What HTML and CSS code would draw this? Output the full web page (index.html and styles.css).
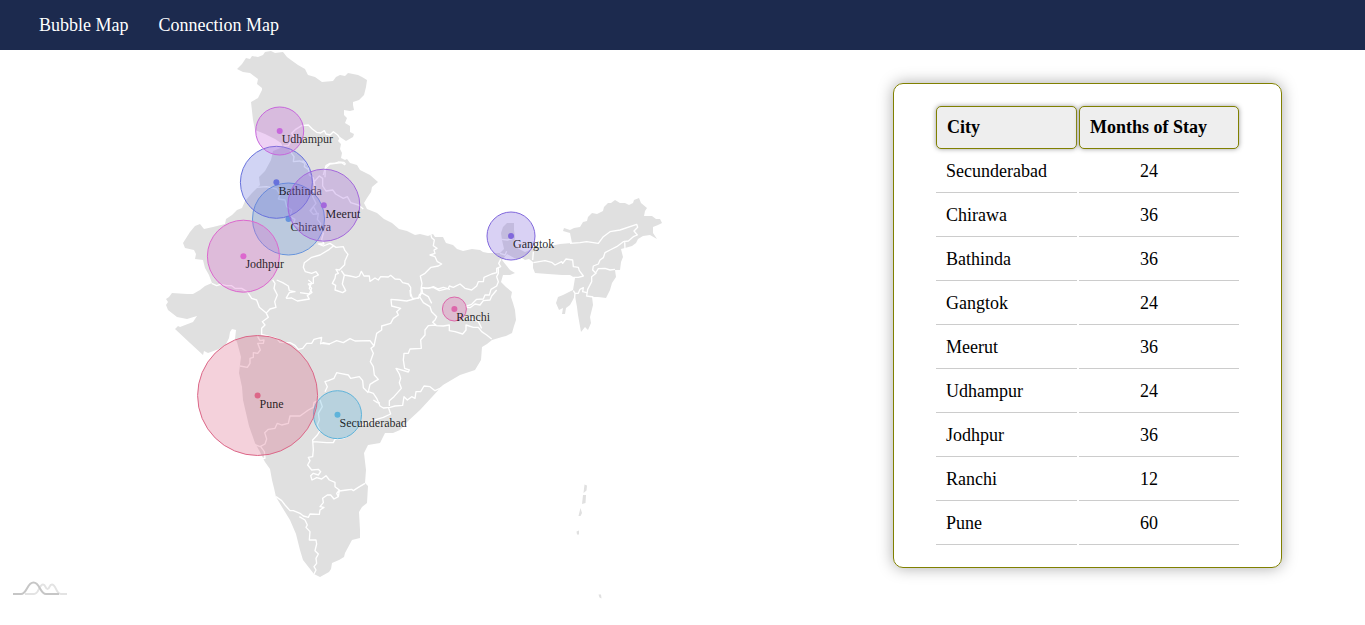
FILE: index.html
```html
<!DOCTYPE html>
<html lang="en">
<head>
<meta charset="utf-8">
<title>Bubble Map</title>
<link rel="stylesheet" href="styles.css">
</head>
<body>
<nav class="navbar"><a class="nav-link" href="#">Bubble Map</a><a class="nav-link" href="#">Connection Map</a></nav>
<main class="content">
<svg class="map" viewBox="0 50 800 575" width="800" height="575">
  <g class="land">
    <path d="M237 69L242 64 246 58 250 59 252 56 258 57 263 55 265 52 271 51 275 53 283 52 287 57 291 60 298 65 305 69 308 75 315 77 322 82 333 81 336 77 340 75 345 76 348 73 358 75 362 77 367 80 366 87 364 95 359 100 353 102 353 105 354 110 350 111 344 110 344 115 347 118 345 123 350 126 350 132 354 134 353 137 346 141 340 137 338 141 341 144 340 149 342 153 341 158 345 160 347 159 350 163 357 165 360 170 370 175 378 182 372 187 371 192 367 198 364 203 367 209 377 213 384 219 392 223 399 229 407 231 415 235 420 234 428 236 433 234 435 237 443 237 446 243 453 245 457 249 463 251 472 249 480 250 483 252 488 253 500 253 504 249 502 240 501 233 503 227 507 223 514 223 514 230 515 237 514 244 519 249 525 252 530 250 532 247 540 247 550 246 560 244 572 243 570 233 563 231 564 228 570 230 574 228 580 227 583 222 587 221 588 217 592 213 597 214 603 211 604 207 608 203 611 203 615 200 620 203 625 203 629 205 633 203 634 200 639 198 641 203 647 208 645 211 644 216 652 216 656 219 660 219 662 223 658 225 653 227 653 233 657 239 650 235 643 236 638 239 636 243 632 246 625 248 621 249 623 257 621 262 620 270 615 270 616 277 612 283 610 290 606 298 598 297 592 297 593 305 590 317 591 323 588 330 585 327 581 332 578 315 577 307 575 296 570 305 566 308 565 314 562 314 563 308 559 310 556 303 558 297 563 295 573 290 575 278 570 275 562 275 548 274 535 273 533 268 533 262 529 259 525 260 522 258 516 259 507 254 502 260 510 270 515 273 510 275 503 275 501 282 506 287 512 292 511 297 513 303 515 310 516 320 514 326 512 333 506 336 502 337 492 340 487 344 482 347 481 360 475 370 460 375 443 385 432 397 420 410 407 422 400 430 393 433 385 433 383 437 380 443 368 445 364 453 366 470 365 483 368 486 367 503 362 507 359 512 360 530 360 538 352 540 345 553 344 557 339 560 332 563 331 569 329 572 320 577 314 574 303 560 300 550 296 534 290 520 282 507 276 497 274 488 272 480 270 469 265 462 260 452 255 443 249 426 243 400 242 387 239 373 241 357 237 342 235 339 236 330 232 329 230 332 229 338 226 344 219 349 208 353 204 351 203 355 190 343 175 329 178 326 180 327 193 322 197 316 187 319 177 317 168 310 166 305 168 302 166 299 169 297 172 293 187 294 193 294 200 290 205 286 212 283 209 275 205 268 203 260 195 259 196 254 194 250 185 248 183 243 190 232 195 226 200 224 204 229 213 227 225 224 226 219 232 215 237 210 242 208 245 201 252 193 260 185 259 177 265 171 271 160 273 151 283 147 281 143 275 139 265 134 255 130 253 120 252 111 251 102 258 98 262 90 262 88 257 84 258 79 250 73 243 72Z"/>
    <path d="M584.5 484.5l2.5 1-.5 5-3 2.5zM583 495l3 0-.5 8-3.500 1zM580.500 508l1.500 5-1.500 3-2 0zM576.500 531.500l2.500-1 0 4-2 0zM598.500 594.500l2.500 0 .5 4-2-1z"/>
  </g>
  <g class="borders">
    <path transform="translate(225 45) scale(.33333)" d="M175 303L190 302 200 285 207 275 200 265 212 253 230 242 250 240 262 252 275 262 287 264 298 257 303 267 315 270 325 260 338 270 345 280M195 315L200 325 207 335 205 350 225 348 240 355 238 365 252 375M295 390L303 362 315 355 330 355 340 351 357 352 362 358"/>
    <path transform="translate(160 165) scale(.33333)" d="M290 67L320 65 350 72 360 90 355 102 375 105 380 125 395 135 390 155 405 163 400 178 420 185 430 190M155 355L170 362 182 358 200 362 215 362 225 370 245 370 265 382"/>
    <path transform="translate(300 140) scale(.33333)" d="M0 65L13 63 25 78 28 105 40 114 45 140 38 170 48 190 30 212 40 223 55 220 52 238 62 250 60 268 70 280 65 298 72 312 55 312 70 318 90 310 108 322 130 320 135 332 144 343 135 362 134 374 118 390 108 388 115 400 107 403 105 415 97 430 107 436 105 450 128 458 137 452 127 432 133 405 124 392M132 405L150 408 168 412 178 408 184 394 192 408 208 408 210 424 225 414 235 420 242 410 265 411 272 406 285 417 300 418 308 428 325 432 332 442 332 460 337 475 355 475 359 463 367 460 363 447 366 430 361 408 375 400 393 382 415 378 425 372 412 365 405 350 390 345 405 340 402 330 411 325 400 317 403 300 395 293 393 285M100 318L88 328 60 345 35 352 13 368 10 382 16 395 35 400 48 395 55 405 40 412 40 430 25 432 35 445 28 462 0 458M363 442L385 445 400 440 415 447 430 442 450 448M75 112L76 85 90 72 125 68 135 75M40 128L58 108 68 115 68 138 78 153 98 150 107 162 130 175 142 170 152 188 175 195 190 207M32 213L40 200 50 218 48 224"/>
    <path transform="translate(160 280) scale(.33333)" d="M265 40L275 55 290 60 298 82 318 98 325 112 307 125 315 135 305 145 305 163 330 170 350 176 360 187 390 188 405 196 415 208 428 205 440 190 455 190 462 178 485 172 482 190 510 192M320 98L330 87 348 82 344 65 352 45 342 25 345 10 338 0M378 55L395 54 412 63 448 57 442 47 456 37 448 25 455 8 445 0M378 55L388 38 405 35 388 32 385 18 368 8 350 0M293 170L300 182 312 180 310 190 293 190 301 210 293 220 280 218 280 232 270 235 270 250 262 262 240 258"/>
    <path transform="translate(320 290) scale(.33333)" d="M0 162L10 158 28 162 50 152 70 158 90 146 105 153 150 152 162 168 153 175 160 190 151 215 160 230 163 255 175 268 163 275 150 283 145 305 160 310 170 325 180 348 190 354 210 352 225 348 248 346 252 320 262 330 275 320 285 325 288 305 302 305 312 288 330 290 345 302 360 295 375 285M162 168L170 130 185 120 185 108 212 100 220 85 235 75 230 65 242 55 215 48 213 28 235 30 260 33 300 22 310 38 330 50 335 65 350 80 345 90 338 97 348 105 325 107 315 120 315 135 302 150 304 175 270 177 265 190 252 190 250 210 254 235 268 240 265 246 228 235 238 252 242 265 238 278 244 295 222 320 208 332 208 348M145 308L130 293 128 272 118 260 92 265 85 255 60 250 50 248 42 265 25 272 15 275 22 290 15 305M347 107L370 108 388 105 388 122 405 125 428 132 438 120 438 105 460 112 475 112 485 125 500 135 515 147M440 52L450 53 465 42 480 45 490 32 510 30 515 18 530 0M445 82L460 88 475 95 485 115M300 20L305 0M270 0L272 20M205 352L212 372 190 382 170 388 150 395 125 405"/>
    <path transform="translate(240 400) scale(.33333)" d="M40 132L60 140 75 132 80 117 74 98 85 88 105 85 112 70 125 75 145 70 150 48 180 48 205 30 220 22 222 8 235 0M65 175L75 175 73 155 62 140M240 0L247 20 235 40 238 60 232 75 240 92 232 105 218 120 220 150 218 170 205 172 210 182 203 195 215 210 235 208 242 215 235 225 220 220 212 227 216 240 230 233 245 237 258 227 268 240 285 247 285 260 298 270 290 280 295 290 282 297 272 285 262 285 248 295 250 308 240 320 252 322 240 330 238 343 210 342 205 352 190 348 180 340 160 332 150 332 135 315 125 302 108 290M178 350L195 360 202 375 198 382 210 395 208 420 228 420 230 432 225 452 235 462 228 475 230 490 222 500 228 510 222 522M220 125L260 128 280 128 285 118 310 115 320 110M295 290L298 273 320 270 335 268 340 272 355 262 375 250M400 0L412 8 420 9"/>
    <path transform="translate(420 200) scale(.33333)" d="M5 262L15 265 40 262 58 272 85 265 88 258 100 262 120 252 135 265 155 270 170 258 175 245 190 245 192 232 215 222 230 218 230 205 242 200 236 190 242 178M235 205L235 220 230 230 235 245 230 258 213 268 208 285 195 285 190 297 170 298 155 313 135 320M5 262L8 280 25 290 35 310M245 118L262 120 280 115M240 160L255 165 260 154"/>
    <path transform="translate(520 190) scale(.33333)" d="M150 160L180 158 200 155 235 160 250 140 270 125 300 120 350 103 353 112 342 123 352 135 340 140 325 153 310 155 290 170 270 180 255 188 250 203 240 210 235 222 220 228 218 240 228 250 215 260 215 275 203 298 200 318 220 321M225 252L235 236 255 235 270 240 285 238M160 302L165 310 175 310 180 298 190 293 188 305 200 308M40 218L75 212 95 217 105 225 125 215 128 220 138 207 158 210 160 230 175 232 178 242 190 258 175 262 160 262M165 310L163 330M314 152L315 178M40 185L38 210"/>
  </g>
  <g class="city secunderabad"><circle class="bubble" cx="337.5" cy="414.7" r="24"/><circle class="dot" cx="337.5" cy="414.7" r="3"/><text x="339.5" y="427">Secunderabad</text></g>
  <g class="city chirawa"><circle class="bubble" cx="288.5" cy="219" r="36"/><circle class="dot" cx="288.5" cy="219" r="3"/><text x="290.5" y="231">Chirawa</text></g>
  <g class="city bathinda"><circle class="bubble" cx="276.4" cy="182.3" r="36"/><circle class="dot" cx="276.4" cy="182.3" r="3"/><text x="278.4" y="195">Bathinda</text></g>
  <g class="city gangtok"><circle class="bubble" cx="511" cy="236" r="24"/><circle class="dot" cx="511" cy="236" r="3"/><text x="513" y="248">Gangtok</text></g>
  <g class="city meerut"><circle class="bubble" cx="323.8" cy="205.2" r="36"/><circle class="dot" cx="323.8" cy="205.2" r="3"/><text x="325.6" y="218">Meerut</text></g>
  <g class="city udhampur"><circle class="bubble" cx="279.7" cy="131" r="24"/><circle class="dot" cx="279.7" cy="131" r="3"/><text x="281.7" y="143">Udhampur</text></g>
  <g class="city jodhpur"><circle class="bubble" cx="243.4" cy="256.2" r="36"/><circle class="dot" cx="243.4" cy="256.2" r="3"/><text x="245.4" y="268">Jodhpur</text></g>
  <g class="city ranchi"><circle class="bubble" cx="454.4" cy="309" r="12"/><circle class="dot" cx="454.4" cy="309" r="3"/><text x="456.2" y="321">Ranchi</text></g>
  <g class="city pune"><circle class="bubble" cx="257.6" cy="395.5" r="60"/><circle class="dot" cx="257.6" cy="395.5" r="3"/><text x="259.6" y="408">Pune</text></g>
  <g class="chart-logo"><path class="logo-light" d="M25 594H34C39 594 39 584.5 43 584.5 46 584.5 45 589 47.5 589 50 589 49 584.5 52 584.5 56 584.5 56 594 61 594H67"/><path class="logo-dark" d="M13 594H21C27 594 27 582.5 33.5 582.5 40 582.5 40 594 46 594H59"/></g>
</svg>
<section class="stay-card">
<table class="stay-table">
<thead><tr><th>City</th><th>Months of Stay</th></tr></thead>
<tbody>
<tr><td>Secunderabad</td><td>24</td></tr>
<tr><td>Chirawa</td><td>36</td></tr>
<tr><td>Bathinda</td><td>36</td></tr>
<tr><td>Gangtok</td><td>24</td></tr>
<tr><td>Meerut</td><td>36</td></tr>
<tr><td>Udhampur</td><td>24</td></tr>
<tr><td>Jodhpur</td><td>36</td></tr>
<tr><td>Ranchi</td><td>12</td></tr>
<tr><td>Pune</td><td>60</td></tr>
</tbody>
</table>
</section>
</main>
</body>
</html>
```
FILE: styles.css
```css
* { box-sizing: border-box; }
body { margin: 0; font-family: "Liberation Serif", "Times New Roman", serif; font-size: 18px; color: #000; background: #fff; overflow: hidden; }
.navbar { height: 50px; background: #1c2a4e; display: flex; align-items: center; gap: 30px; padding-left: 39px; }
.nav-link { color: #fff; text-decoration: none; line-height: 21px; }
.content { display: flex; align-items: flex-start; height: 575px; }
.map { display: block; flex: none; }
.land { fill: #e0e0e0; }
.borders { fill: none; stroke: #fff; stroke-width: 4; stroke-linejoin: round; }
.bubble { fill: currentColor; fill-opacity: .3; stroke: currentColor; stroke-width: 1; }
.dot { fill: currentColor; }
.city text { font-size: 12px; fill: #000; fill-opacity: .85; }
.secunderabad { color: #5eb3da; }
.chirawa { color: #6794dc; }
.bathinda { color: #6771dc; }
.gangtok { color: #8067dc; }
.meerut { color: #a367dc; }
.udhampur { color: #c767dc; }
.jodhpur { color: #dc67ce; }
.ranchi { color: #dc67ab; }
.pune { color: #dc6788; }
.chart-logo { fill: none; stroke-width: 2; }
.logo-light { stroke: #e3e3e3; }
.logo-dark { stroke: #c6c6c6; }
.stay-card { margin: 33px 0 0 93px; width: 389px; padding: 20px 40px; border: 1px solid olive; border-radius: 10px; box-shadow: 0 0 15px #aaa; }
.stay-table { width: 307px; table-layout: fixed; border-collapse: separate; border-spacing: 2px; line-height: 21px; }
th, td { padding: 10px 30px 10px 10px; text-align: left; white-space: nowrap; }
th { background: #eee; border: 1px solid olive; border-radius: 5px; box-shadow: 0 0 5px #999; }
th:first-child { width: 141px; }
td { border-bottom: 1px solid #ccc; }
td:last-child { text-align: center; }
```
